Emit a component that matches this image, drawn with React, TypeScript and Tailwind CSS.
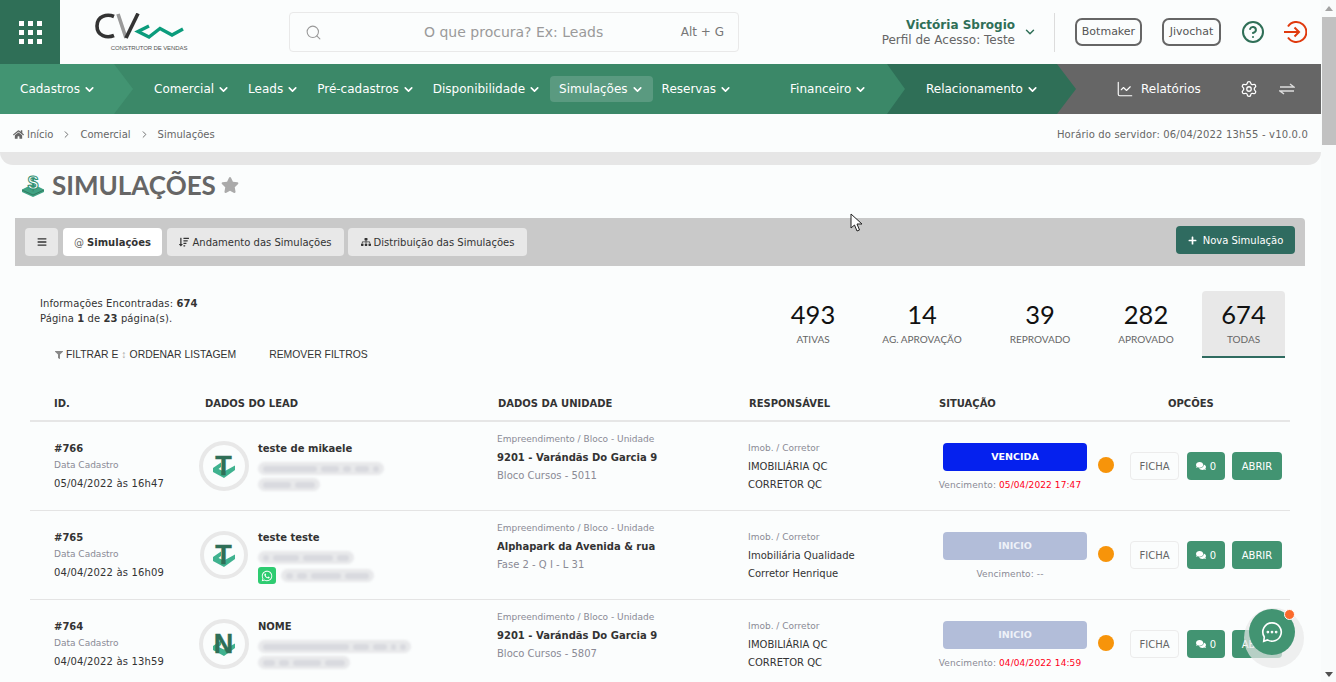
import { ReactNode } from "react";
import { ChartLine, ChevronDown, ChevronRight, CircleHelp, Search, Settings } from "lucide-react";
import { FaBars, FaComments, FaFilter, FaHome, FaPlus, FaSitemap, FaSortAmountDown, FaStar, FaWhatsapp } from "react-icons/fa";

const rows = [
  {
    id: "#766",
    date: "05/04/2022 às 16h47",
    name: "teste de mikaele",
    letter: "T",
    unit: "9201 - Varándãs Do Garcia 9",
    block: "Bloco Cursos - 5011",
    imob: "IMOBILIÁRIA QC",
    broker: "CORRETOR QC",
    status: "VENCIDA",
    due: "05/04/2022 17:47",
    line1: [54, 18, 8, 14, 6],
    line2: [28, 20],
    whats: false,
  },
  {
    id: "#765",
    date: "04/04/2022 às 16h09",
    name: "teste teste",
    letter: "T",
    unit: "Alphapark da Avenida & rua",
    block: "Fase 2 - Q I - L 31",
    imob: "Imobiliária Qualidade",
    broker: "Corretor Henrique",
    status: "INICIO",
    due: "--",
    line1: [6, 26, 30, 12],
    line2: [7, 10, 30, 24],
    whats: true,
  },
  {
    id: "#764",
    date: "04/04/2022 às 13h59",
    name: "NOME",
    letter: "N",
    unit: "9201 - Varándãs Do Garcia 9",
    block: "Bloco Cursos - 5807",
    imob: "IMOBILIÁRIA QC",
    broker: "CORRETOR QC",
    status: "INICIO",
    due: "04/04/2022 14:59",
    line1: [86, 16, 14, 5, 6],
    line2: [12, 10, 28, 20],
    whats: false,
  },
];

const stats = [
  { value: "493", label: "ATIVAS", width: "w-[82px]" },
  { value: "14", label: "AG. APROVAÇÃO", width: "w-[136px]" },
  { value: "39", label: "REPROVADO", width: "w-[100px]" },
  { value: "282", label: "APROVADO", width: "w-[112px]" },
];

function NavItem({ label, active, className = "" }: { label: string; active?: boolean; className?: string }) {
  return (
    <div className={`flex h-[26px] items-center gap-[3px] rounded px-[9px] text-[12px] whitespace-nowrap text-white ${active ? "bg-[#5a9a80]" : ""} ${className}`}>
      {label}
      <ChevronDown size={13} strokeWidth={3} />
    </div>
  );
}

function CvLogo() {
  return (
    <div className="ml-[35px] flex w-[90px] flex-col items-center">
      <svg width="90" height="28" viewBox="0 0 90 28" fill="none">
        <path d="M19 3.5 C12 0.5 2 3 2 13 C2 23 12 25.5 19 22.5" stroke="#333" strokeWidth="3.6" />
        <path d="M23 1 L31 25" stroke="#9a9a9a" strokeWidth="3.6" />
        <path d="M43 0.5 L31 25" stroke="#333" strokeWidth="3.6" />
        <path d="M54 13 L43 18.5 L54 24 L65 15.5 L77 22 L88 16" stroke="#0b9c7c" strokeWidth="3.4" />
      </svg>
      <span className="mt-[3px] pl-[18px] font-['Liberation_Sans',sans-serif] text-[6px] leading-[8px] tracking-[-0.1px] whitespace-nowrap text-[#555]">CONSTRUTOR DE VENDAS</span>
    </div>
  );
}

function Avatar({ letter, small }: { letter: string; small?: boolean }) {
  return (
    <div className="flex h-[50px] w-[50px] shrink-0 items-center justify-center">
      <div className={`flex items-center justify-center rounded-full border-[4px] border-[#e8e8e8] ${small ? "h-[48px] w-[48px]" : "h-[50px] w-[50px]"}`}>
        <svg width="30" height="30" viewBox="0 0 30 30">
          <path d="M4 17 L12 11.5 L12 16 L9.5 18 L15 20.5 L26 14.5 L26 19 L15 27 L4 21 Z" fill="#3fb28f" />
          <text x="14.5" y="24" textAnchor="middle" fontFamily="Liberation Sans" fontWeight="700" fontSize="27" fill="#2f6f57" stroke="#2f6f57" strokeWidth="0.4">{letter}</text>
        </svg>
      </div>
    </div>
  );
}

function Smudge({ parts }: { parts: number[] }) {
  return (
    <div className="flex h-[13px] w-fit items-center gap-[4px] rounded-full bg-[#e8e9eb] px-[5px] blur-[1px]">
      {parts.map((w, i) => (
        <div key={i} className="h-[6px] rounded-full bg-[#d9dadf]" style={{ width: w }} />
      ))}
    </div>
  );
}

function ActionButton({ children, className = "" }: { children: ReactNode; className?: string }) {
  return <div className={`flex h-[28px] items-center justify-center rounded text-[10px] ${className}`}>{children}</div>;
}

function Row({ row }: { row: (typeof rows)[number] }) {
  const late = row.due !== "--";
  return (
    <div className="grid h-[89px] grid-cols-[169px_298px_251px_190px_192px_160px] border-b border-[#e4e4e4]">
      <div className="pt-[19px] pl-6">
        <div className="text-[10px] leading-[16px] font-bold text-[#333]">{row.id}</div>
        <div className="text-[9px] leading-[16px] text-[#8a8a95]">Data Cadastro</div>
        <div className="mt-[3px] text-[10px] leading-[16px] tracking-[0.15px] text-[#333]">{row.date}</div>
      </div>
      <div className="flex gap-[9px] pt-[19px]">
        <Avatar letter={row.letter} small={row.whats} />
        <div className="flex flex-col">
          <div className="pt-[1px] text-[10px] leading-[14px] font-bold text-[#333]">{row.name}</div>
          <div className="mt-[6px]"><Smudge parts={row.line1} /></div>
          <div className="mt-[3px] flex items-center gap-[5px]">
            {row.whats && (
              <div className="flex h-[17px] w-[18px] items-center justify-center rounded-[3px] bg-[#2ecc71]">
                <FaWhatsapp size={12} color="#fff" />
              </div>
            )}
            <Smudge parts={row.line2} />
          </div>
        </div>
      </div>
      <div className="pt-[8px] text-[10px] leading-[18.5px]">
        <div className="text-[9px] text-[#8a8a95]">Empreendimento / Bloco - Unidade</div>
        <div className="font-bold text-[#333]">{row.unit}</div>
        <div className="text-[#8a8a95]">{row.block}</div>
      </div>
      <div className="pt-[17px] text-[10px] leading-[18.5px] text-[#333]">
        <div className="text-[9px] text-[#8a8a95]">Imob. / Corretor</div>
        <div>{row.imob}</div>
        <div>{row.broker}</div>
      </div>
      <div className="flex pt-[21px]">
        <div className="w-[149px]">
          <div className={`ml-[5px] flex h-[28px] w-[144px] items-center justify-center rounded pt-[1px] text-[9.5px] font-bold ${row.status === "VENCIDA" ? "bg-[#0521ee] text-white" : "bg-[#b2bdd9] text-[#eef1f8]"}`}>
            {row.status}
          </div>
          <div className="mt-[5px] w-[144px] text-center text-[9px] leading-[18px] tracking-[0.1px] whitespace-nowrap text-[#8a8a95]">
            Vencimento: <span className={late ? "text-[#ff0019]" : ""}>{row.due}</span>
          </div>
        </div>
        <div className="mt-[14px] ml-[11px] h-[16px] w-[16px] rounded-full bg-[#f7940a]" />
      </div>
      <div className="flex gap-[7px] pt-[30px]">
        <ActionButton className="w-[49px] border border-[#ececec] text-[#666]">FICHA</ActionButton>
        <ActionButton className="ml-px w-[38px] gap-[4px] bg-[#429472] text-white"><FaComments size={10} />0</ActionButton>
        <ActionButton className="w-[50px] bg-[#429472] text-white">ABRIR</ActionButton>
      </div>
    </div>
  );
}

export default function App() {
  return (
    <div className="relative flex h-[682px] w-[1336px] overflow-hidden bg-[#fbfdfd] font-['DejaVu_Sans',sans-serif] text-[#333]">
      <main className="w-[1321px] shrink-0">
        {/* top bar */}
        <header className="flex h-[64px] items-center">
          <div className="grid h-[64px] w-[60px] grid-cols-[5px_5px_5px] content-center justify-center gap-x-[4px] gap-y-[4px] bg-[#2f6f57]">
            {Array.from({ length: 9 }).map((_, i) => (
              <div key={i} className="h-[5px] w-[5px] bg-white" />
            ))}
          </div>
          <CvLogo />
          <div className="ml-[104px] flex h-[40px] w-[450px] items-center rounded border border-[#e9e9e9] pr-[14px] pl-[15px]">
            <Search size={17} strokeWidth={1.5} className="text-[#999]" />
            <span className="ml-[102px] text-[14px] whitespace-nowrap text-[#9a9a9a]">O que procura? Ex: Leads</span>
            <span className="ml-auto text-[12px] text-[#777]">Alt + G</span>
          </div>
          <div className="ml-auto flex flex-col items-end">
            <span className="text-[12px] leading-[16px] font-bold text-[#2f6f57]">Victória Sbrogio</span>
            <span className="text-[12px] leading-[15px] text-[#666]">Perfil de Acesso: Teste</span>
          </div>
          <ChevronDown size={14} strokeWidth={2.5} className="ml-[8px] text-[#2f6f57]" />
          <div className="mx-[20px] ml-[17px] h-[39px] w-px bg-[#dcdcdc]" />
          <div className="flex h-[28px] w-[67px] items-center justify-center rounded-[7px] border-2 border-[#666] text-[11px] text-[#555]">Botmaker</div>
          <div className="ml-[20px] flex h-[28px] w-[59px] items-center justify-center rounded-[7px] border-2 border-[#666] text-[11px] text-[#555]">Jivochat</div>
          <CircleHelp size={24} strokeWidth={2} className="ml-[20px] text-[#2f6f57]" />
          <svg width="24" height="24" viewBox="0 0 24 24" fill="none" stroke="#e03a0e" strokeWidth="2" className="mr-[14px] ml-[18px]">
            <path d="M5 6.5 A10 10 0 1 1 5 17.5" />
            <path d="M1 12 H16 M11.5 7.5 L16 12 L11.5 16.5" />
          </svg>
        </header>

        {/* main nav */}
        <nav className="flex h-[50px] bg-[#666]">
          <div className="relative z-30 flex w-[133px] shrink-0 items-center bg-[#429472] pl-[11px] [clip-path:polygon(0_0,114px_0,133px_50%,114px_100%,0_100%)]">
            <NavItem label="Cadastros" />
          </div>
          <div className="relative z-20 -ml-[19px] flex w-[791px] shrink-0 items-center bg-[#3b8868] pl-[31px] [clip-path:polygon(0_0,773px_0,791px_50%,773px_100%,0_100%)]">
            <NavItem label="Comercial" />
            <NavItem label="Leads" />
            <NavItem label="Pré-cadastros" />
            <NavItem label="Disponibilidade" />
            <NavItem label="Simulações" active />
            <NavItem label="Reservas" />
            <NavItem label="Financeiro" className="ml-[40px]" />
          </div>
          <div className="relative z-10 -ml-[19px] flex w-[190px] shrink-0 items-center bg-[#2f6f57] pl-[31px] [clip-path:polygon(0_0,171px_0,190px_50%,171px_100%,0_100%)]">
            <NavItem label="Relacionamento" />
          </div>
          <div className="flex flex-1 items-center pl-[40px] text-white">
            <ChartLine size={18} strokeWidth={1.5} />
            <span className="ml-[7px] text-[12px]">Relatórios</span>
            <Settings size={18} strokeWidth={1.7} className="ml-[39px]" />
            <svg width="16" height="12" viewBox="0 0 16 12" fill="none" stroke="#ddd" strokeWidth="1.4" className="ml-[21px]">
              <path d="M1 4 H15 L11 1 M15 8 H1 L5 11" />
            </svg>
          </div>
        </nav>

        {/* breadcrumb */}
        <div className="flex h-[38px] items-center pt-[2px] pr-[13px] pl-[13px] text-[10px] text-[#666]">
          <FaHome size={11} />
          <span className="ml-[3px]">Início</span>
          <ChevronRight size={11} className="mx-[8px]" />
          <span>Comercial</span>
          <ChevronRight size={11} className="mx-[8px]" />
          <span>Simulações</span>
          <span className="ml-auto tracking-[0.17px]">Horário do servidor: 06/04/2022 13h55 - v10.0.0</span>
        </div>
        <div className="h-[13px] rounded-b-[14px] bg-[#e6e6e6]" />

        {/* title */}
        <div className="flex h-[40px] items-center pl-5">
          <svg width="25" height="24" viewBox="0 0 25 24" fill="none">
            <path d="M2 16.5 L13 11 L24 16.5 L24 19 L13 24 L2 19 Z" fill="#3fa283" />
            <path d="M2 17 L13 22 L24 17" stroke="#2f6f57" strokeWidth="0.8" />
            <text x="13" y="16" textAnchor="middle" fontFamily="Liberation Sans" fontWeight="700" fontSize="19" fill="#fbfdfd" stroke="#2f8f70" strokeWidth="1">$</text>
          </svg>
          <h1 className="ml-[7px] font-['Lato',sans-serif] text-[26px] font-bold text-[#666]">SIMULAÇÕES</h1>
          <FaStar size={18} className="ml-[5px] text-[#aaa]" />
        </div>

        {/* toolbar */}
        <div className="mt-[13px] ml-[15px] flex h-[48px] w-[1290px] items-center rounded-tr bg-[#c9c9c9] pr-[10px] pl-[10px] text-[10px]">
          <div className="flex h-[28px] w-[33px] items-center justify-center rounded bg-[#e8e8e8]"><FaBars size={10} /></div>
          <div className="ml-[5px] flex h-[28px] w-[99px] items-center justify-center gap-[3px] rounded bg-white">
            <span className="text-[#666]">@</span><span className="font-bold">Simulações</span>
          </div>
          <div className="ml-[5px] flex h-[28px] w-[177px] items-center justify-center gap-[3px] rounded bg-[#e8e8e8]">
            <FaSortAmountDown size={10} />Andamento das Simulações
          </div>
          <div className="ml-[4px] flex h-[28px] w-[179px] items-center justify-center gap-[3px] rounded bg-[#e8e8e8]">
            <FaSitemap size={10} />Distribuição das Simulações
          </div>
          <div className="mb-[4px] ml-auto flex h-[28px] w-[119px] items-center justify-center gap-[6px] rounded bg-[#2f6b60] text-white">
            <FaPlus size={9} />Nova Simulação
          </div>
        </div>

        {/* counters */}
        <div className="flex h-[119px] justify-between pr-[36px]">
          <div className="pt-[30px] pl-10">
            <div className="text-[10px] leading-[15px] tracking-[0.1px]">Informações Encontradas: <b>674</b></div>
            <div className="text-[10px] leading-[15px] tracking-[0.1px]">Página <b>1</b> de <b>23</b> página(s).</div>
            <div className="mt-[22px] ml-[15px] flex items-center font-['Liberation_Sans',sans-serif] text-[10.4px] leading-[14px]">
              <FaFilter size={8} className="mr-[3px] text-[#888]" />
              FILTRAR E
              <span className="mx-[3px] text-[#aaa]">↕</span>
              ORDENAR LISTAGEM
              <span className="ml-[33px]">REMOVER FILTROS</span>
            </div>
          </div>
          <div className="flex pt-[25px]">
            {stats.map((s) => (
              <div key={s.label} className={`flex h-[67px] flex-col items-center pt-[8px] ${s.width}`}>
                <span className="font-['Lato',sans-serif] text-[25.5px] leading-[30px] text-[#111]">{s.value}</span>
                <span className="mt-[3px] font-['Lato',sans-serif] text-[10px] whitespace-nowrap text-[#666]">{s.label}</span>
              </div>
            ))}
            <div className="flex h-[67px] w-[83px] flex-col items-center rounded-t border-b-2 border-[#2f6b60] bg-[#e8e8e8] pt-[8px]">
              <span className="font-['Lato',sans-serif] text-[25.5px] leading-[30px] text-[#111]">674</span>
              <span className="mt-[3px] font-['Lato',sans-serif] text-[10px] text-[#666]">TODAS</span>
            </div>
          </div>
        </div>

        {/* table */}
        <div className="ml-[30px] w-[1260px]">
          <div className="grid h-[37px] grid-cols-[175px_293px_251px_190px_192px_160px] items-center border-b-2 border-[#e6e6e6] pt-[1px] text-[10px] font-bold text-[#333]">
            <span className="pl-6">ID.</span>
            <span>DADOS DO LEAD</span>
            <span>DADOS DA UNIDADE</span>
            <span>RESPONSÁVEL</span>
            <span>SITUAÇÃO</span>
            <span className="pl-[37px]">OPCÕES</span>
          </div>
          {rows.map((r) => (
            <Row key={r.id} row={r} />
          ))}
        </div>
      </main>

      {/* scrollbar */}
      <aside className="flex w-[15px] shrink-0 flex-col items-center bg-[#f9fbfb]">
        <div className="mt-[6px] h-0 w-0 border-x-[4px] border-b-[5px] border-x-transparent border-b-[#a3a3a3]" />
        <div className="mt-[6px] h-[128px] w-[14px] bg-[#c1c1c1]" />
        <div className="mt-auto mb-[5px] h-0 w-0 border-x-[4px] border-t-[5px] border-x-transparent border-t-[#505050]" />
      </aside>

      {/* mouse cursor */}
      <svg width="14" height="20" viewBox="0 0 14 20" className="absolute top-[213px] left-[850px]">
        <path d="M1 1 L1 15 L4.5 12 L7 18 L9.5 17 L7 11 L12 11 Z" fill="#fff" stroke="#222" strokeWidth="1" />
      </svg>

      {/* chat bubble */}
      <div className="absolute top-[608px] left-[1244px] flex h-[60px] w-[60px] items-center justify-center rounded-full bg-[#e8e8e8]/70">
        <div className="relative -mt-[12px] -ml-[5px] flex h-[46px] w-[46px] items-center justify-center rounded-full bg-[#429472]">
          <svg width="22" height="22" viewBox="0 0 24 24" fill="none" stroke="#fff" strokeWidth="1.8">
            <path d="M12 2 A10 10 0 1 1 7 20.6 L3 22 L3.6 17.4 A10 10 0 0 1 12 2 Z" />
            <circle cx="7.5" cy="12" r="0.6" />
            <circle cx="12" cy="12" r="0.6" />
            <circle cx="16.5" cy="12" r="0.6" />
          </svg>
          <div className="absolute top-0 right-0 h-[11px] w-[11px] rounded-full border border-white bg-[#fb6a2c]" />
        </div>
      </div>
    </div>
  );
}
